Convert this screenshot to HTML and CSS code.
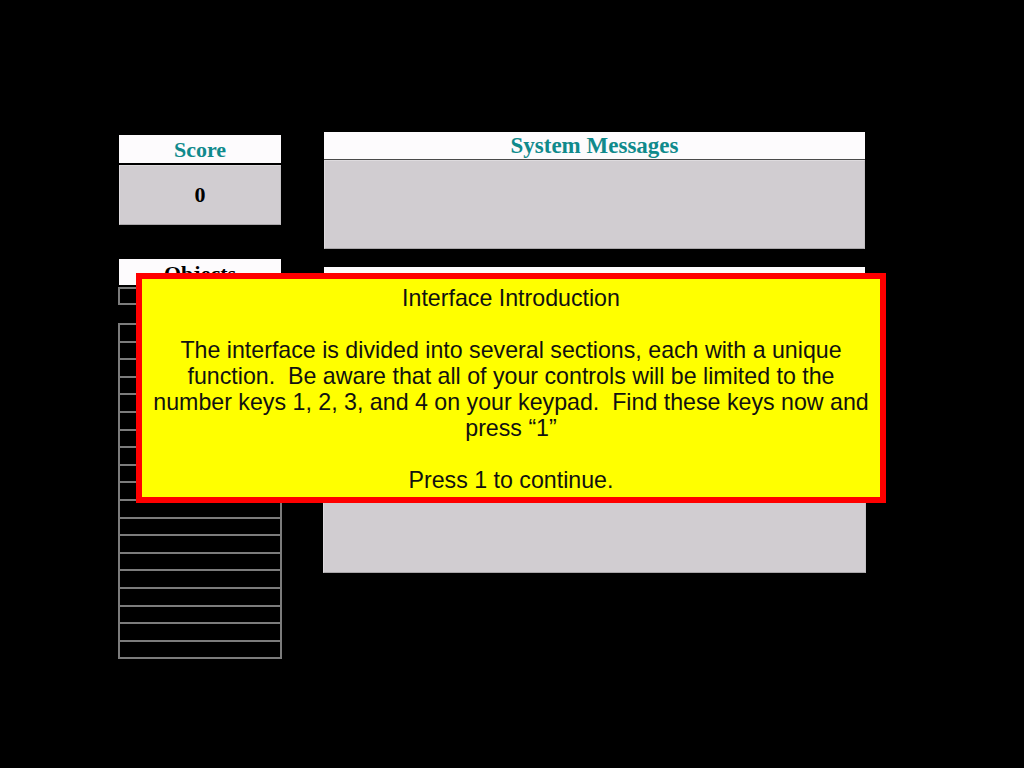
FILE: index.html
```html
<!DOCTYPE html>
<html>
<head>
<meta charset="utf-8">
<link rel="stylesheet" href="styles.css">
</head>
<body>
<div class="screen">
  <div class="left">
    <div class="hdr score-hdr">Score</div>
    <div class="box score-box">0</div>
    <div class="hdr obj-hdr">Objects</div>
    <div class="single-row"></div>
    <div class="rows">
      <div class="row"></div><div class="row"></div><div class="row"></div><div class="row"></div>
      <div class="row"></div><div class="row"></div><div class="row"></div><div class="row"></div>
      <div class="row"></div><div class="row"></div><div class="row"></div><div class="row"></div>
      <div class="row"></div><div class="row"></div><div class="row"></div><div class="row"></div>
      <div class="row"></div><div class="row"></div><div class="row"></div>
    </div>
  </div>
  <div class="right">
    <div class="hdr msg-hdr">System Messages</div>
    <div class="box msg-box"></div>
    <div class="hdr second-hdr"></div>
    <div class="box big-box"></div>
  </div>
  <div class="overlay">
    <p class="line">Interface Introduction</p>
    <p class="line">&nbsp;</p>
    <p class="line">The interface is divided into several sections, each with a unique</p>
    <p class="line">function.&nbsp; Be aware that all of your controls will be limited to the</p>
    <p class="line">number keys 1, 2, 3, and 4 on your keypad.&nbsp; Find these keys now and</p>
    <p class="line">press “1”</p>
    <p class="line">&nbsp;</p>
    <p class="line">Press 1 to continue.</p>
  </div>
</div>
</body>
</html>
```

FILE: styles.css
```css
html, body {
  margin: 0;
  padding: 0;
  background: #000;
}

.screen {
  position: relative;
  width: 1024px;
  height: 768px;
  background: #000;
  display: flex;
  align-items: flex-start;
  padding-left: 118px;
  box-sizing: border-box;
  gap: 41px;
}

.left {
  width: 164px;
  margin-top: 135px;
  display: flex;
  flex-direction: column;
}

.right {
  width: 543px;
  margin-top: 132px;
  display: flex;
  flex-direction: column;
}

.hdr {
  background: #fdfbfd;
  font-family: "Liberation Serif", "Times New Roman", serif;
  font-weight: bold;
  font-size: 22px;
  text-align: center;
  color: #108a8c;
  box-sizing: border-box;
  overflow: hidden;
}

.box {
  background: #d1cdd1;
  border: 1px solid #dedbde;
  border-bottom-color: #a9a6a9;
  border-right-color: #c4c1c4;
  box-sizing: border-box;
}

.score-hdr {
  margin: 0 1px;
  height: 28px;
  line-height: 30px;
}

.score-box {
  margin: 2px 1px 0;
  height: 60px;
  display: flex;
  align-items: center;
  justify-content: center;
  font-family: "Liberation Serif", "Times New Roman", serif;
  font-weight: bold;
  font-size: 22px;
  color: #000;
}

.obj-hdr {
  margin: 34px 1px 0;
  height: 26px;
  line-height: 30px;
  color: #000;
}

.single-row {
  margin-top: 2px;
  height: 18px;
  border: 2px solid #7c7c7c;
  box-sizing: border-box;
}

.rows {
  margin-top: 18px;
  border: 2px solid #7c7c7c;
  border-top: none;
  display: flex;
  flex-direction: column;
}

.row {
  height: 15.6px;
  border-top: 2px solid #7c7c7c;
}

.msg-hdr {
  margin: 0 1px;
  height: 28px;
  line-height: 28px;
  font-size: 23px;
  border-bottom: 1px solid #4a4a4a;
}

.msg-box {
  margin: 0 1px;
  height: 89px;
}

.second-hdr {
  margin: 18px 1px 0;
  height: 27px;
}

.big-box {
  height: 279px;
}

.overlay {
  position: absolute;
  left: 136px;
  top: 273px;
  width: 750px;
  height: 230px;
  box-sizing: border-box;
  background: #ffff00;
  border: 6px solid #ff0000;
  padding: 6px 0 0;
  font-family: "Liberation Sans", Arial, sans-serif;
  font-size: 23.2px;
  line-height: 26px;
  color: #111;
  text-align: center;
}

.line {
  margin: 0;
  white-space: nowrap;
}
```
